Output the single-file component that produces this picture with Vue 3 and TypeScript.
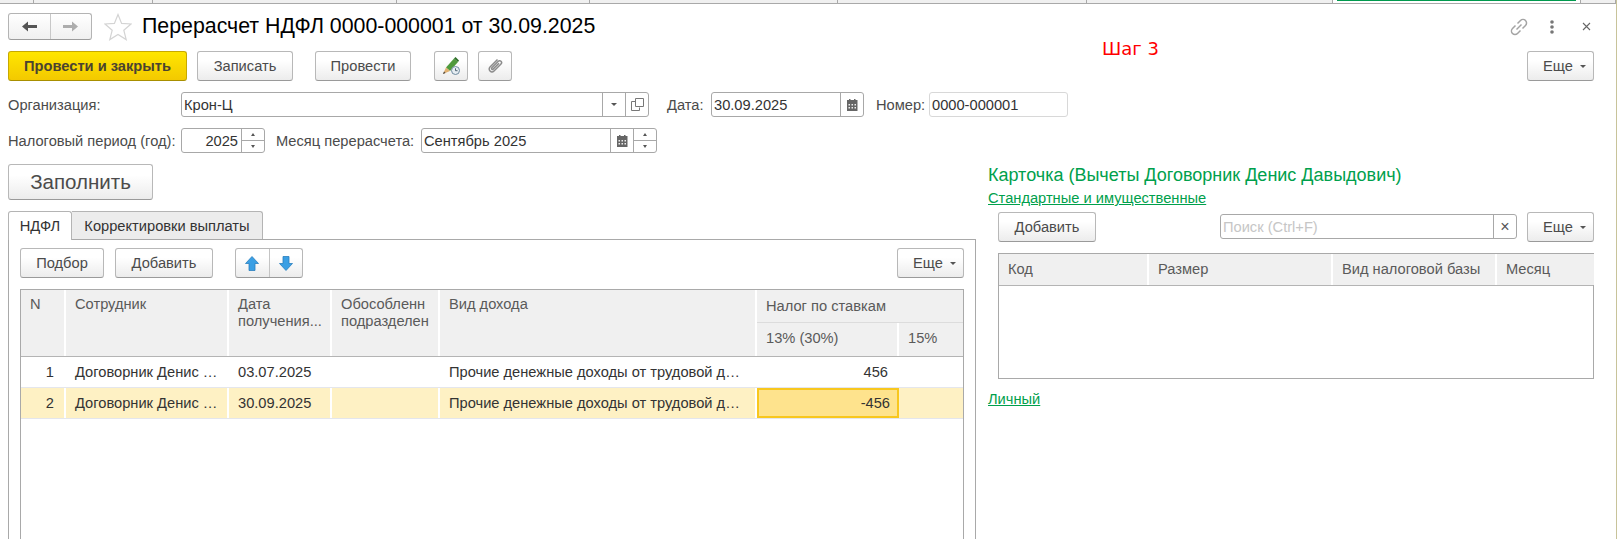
<script setup lang="ts">
const stripStops: number[] = [34, 119, 244, 193, 248, 249, 246, 248, 35]
interface Col { title: string; width: number }
const rows = [
  { n: 1, name: 'Договорник Денис …', date: '03.07.2025', kind: 'Прочие денежные доходы от трудовой д…', tax: '456', current: false },
  { n: 2, name: 'Договорник Денис …', date: '30.09.2025', kind: 'Прочие денежные доходы от трудовой д…', tax: '-456', current: true },
]
const cardCols: Col[] = [
  { title: 'Код', width: 150 },
  { title: 'Размер', width: 184 },
  { title: 'Вид налоговой базы', width: 164 },
  { title: 'Месяц', width: 97 },
]
</script>

<template>
  <div class="page">
    <div class="strip">
      <span v-for="(w, i) in stripStops" :key="i" class="strip-cell" :class="{ active: i === 7 }" :style="{ width: w + 'px' }"></span>
    </div>

    <header class="title-row">
      <div class="nav">
        <span class="nav-btn">
          <svg width="17" height="13" viewBox="0 0 17 13"><path d="M1 6.500 7 1.500V5H16V8H7v3.500z" fill="#555"/></svg>
        </span>
        <span class="nav-btn">
          <svg width="17" height="13" viewBox="0 0 17 13"><path d="M16 6.500 10 1.500V5H1V8h9v3.500z" fill="#adadad"/></svg>
        </span>
      </div>
      <svg class="star" width="28" height="28" viewBox="0 0 28 28"><path d="M14 1.500 17.600 10.400 27 11 19.800 17.200 22.200 26.600 14 21.500 5.800 26.600 8.200 17.200 1 11 10.400 10.400z" fill="#fff" stroke="#d4d4d4" stroke-width="1.200"/></svg>
      <h1 class="title">Перерасчет НДФЛ 0000-000001 от 30.09.2025</h1>
      <div class="win-icons">
        <svg width="20" height="20" viewBox="0 0 20 20" fill="none" stroke="#a4a4a4" stroke-width="1.500"><path d="M8.500 6.500 11.500 3.500a3.500 3.500 0 0 1 5 5L13.500 11.500"/><path d="M11.500 13.500 8.500 16.500a3.500 3.500 0 0 1-5-5L6.500 8.500"/><path d="M7.500 12.500 12.500 7.500"/></svg>
        <svg class="dots" width="6" height="14" viewBox="0 0 6 14" fill="#777"><circle cx="3" cy="2" r="1.800"/><circle cx="3" cy="7" r="1.800"/><circle cx="3" cy="12" r="1.800"/></svg>
        <svg class="close" width="9" height="9" viewBox="0 0 9 9" stroke="#666" stroke-width="1.100"><path d="M1 1 8 8M8 1 1 8"/></svg>
      </div>
    </header>

    <div class="toolbar">
      <button class="btn primary">Провести и закрыть</button>
      <button class="btn w-zapisat">Записать</button>
      <button class="btn w-provesti">Провести</button>
      <button class="btn icon-btn first-icon">
        <svg width="20" height="20" viewBox="0 0 20 20">
          <path d="M5 11.500 13 2.500 17 6 9 15z" fill="#4f9a3c"/>
          <path d="M13 2.500 14.500 1 18 4.500 17 6z" fill="#2f6f2a"/>
          <path d="M2 18 5 11.500 9 15z" fill="#e0b070"/>
          <path d="M2 18 3 15.500 4.500 17z" fill="#444"/>
          <circle cx="14.500" cy="14.500" r="4" fill="#e6edf2" stroke="#6f8ba0"/>
          <path d="M14.500 12.300v2.400h2" fill="none" stroke="#4d6472"/>
        </svg>
      </button>
      <button class="btn icon-btn">
        <svg width="18" height="18" viewBox="0 0 18 18" fill="none" stroke="#8c8c8c" stroke-width="1.500"><path d="M11.500 2.500 4 10a2.800 2.800 0 0 0 4 4l7-7a1.900 1.900 0 0 0-2.700-2.700L5.800 10.800a.9.900 0 0 0 1.300 1.300L13 6.200"/></svg>
      </button>
      <button class="btn more toolbar-more">Еще<i class="caret"></i></button>
    </div>

    <div class="form-row">
      <label class="lbl org-lbl">Организация:</label>
      <div class="field org">
        <span class="val">Крон-Ц</span>
        <span class="addon"><i class="caret dark"></i></span>
        <span class="addon">
          <svg width="13" height="13" viewBox="0 0 13 13" fill="none" stroke="#777"><path d="M4.500 3.500H.5v9h8v-3"/><path d="M4.500.5h8v8h-8z"/></svg>
        </span>
      </div>
      <label class="lbl date-lbl">Дата:</label>
      <div class="field date">
        <span class="val">30.09.2025</span>
        <span class="addon">
          <svg width="12" height="12" viewBox="0 0 12 12"><path d="M1 1h10.500v11H1z" fill="#666"/><path d="M3 0h1.500v2H3zM8 0h1.500v2H8z" fill="#666"/><path d="M2.500 5h1.500v1.500H2.500zM5.500 5H7v1.500H5.500zM8.500 5H10v1.500H8.500zM2.500 8h1.500v1.500H2.500zM5.500 8H7v1.500H5.500zM8.500 8H10v1.500H8.500z" fill="#eee"/></svg>
        </span>
      </div>
      <label class="lbl num-lbl">Номер:</label>
      <div class="field num"><span class="val">0000-000001</span></div>
    </div>

    <div class="form-row second">
      <label class="lbl period-lbl">Налоговый период (год):</label>
      <div class="field year">
        <span class="val right">2025</span>
        <span class="spin"><i class="up"></i><i class="down"></i></span>
      </div>
      <label class="lbl month-lbl">Месяц перерасчета:</label>
      <div class="field month">
        <span class="val">Сентябрь 2025</span>
        <span class="addon">
          <svg width="12" height="12" viewBox="0 0 12 12"><path d="M1 1h10.500v11H1z" fill="#666"/><path d="M3 0h1.500v2H3zM8 0h1.500v2H8z" fill="#666"/><path d="M2.500 5h1.500v1.500H2.500zM5.500 5H7v1.500H5.500zM8.500 5H10v1.500H8.500zM2.500 8h1.500v1.500H2.500zM5.500 8H7v1.500H5.500zM8.500 8H10v1.500H8.500z" fill="#eee"/></svg>
        </span>
        <span class="spin"><i class="up"></i><i class="down"></i></span>
      </div>
    </div>

    <div class="body">
      <section class="left">
        <button class="btn fill">Заполнить</button>
        <div class="tabs">
          <span class="tab active">НДФЛ</span>
          <span class="tab">Корректировки выплаты</span>
        </div>
        <div class="panel">
          <div class="panel-bar">
            <button class="btn w-podbor">Подбор</button>
            <button class="btn w-add">Добавить</button>
            <div class="arrows">
              <span class="arrow-btn">
                <svg width="16" height="17" viewBox="0 0 16 17"><path d="M8 1.500 14.500 8.500H11v7H5v-7H1.500z" fill="#3a9fe4" stroke="#2a7fbe" stroke-width=".8"/></svg>
              </span>
              <span class="arrow-btn">
                <svg width="16" height="17" viewBox="0 0 16 17"><path d="M8 15.500 14.500 8.500H11v-7H5v7H1.500z" fill="#3a9fe4" stroke="#2a7fbe" stroke-width=".8"/></svg>
              </span>
            </div>
            <button class="btn more panel-more">Еще<i class="caret"></i></button>
          </div>
          <div class="grid">
            <div class="grid-head">
              <div class="hc c-n">N</div>
              <div class="hc c-emp">Сотрудник</div>
              <div class="hc c-date">Дата<br>получения...</div>
              <div class="hc c-div">Обособленн<br>подразделен</div>
              <div class="hc c-kind">Вид дохода</div>
              <div class="hgroup">
                <div class="hc g-top">Налог по ставкам</div>
                <div class="g-sub">
                  <div class="hc c-13">13% (30%)</div>
                  <div class="hc c-15">15%</div>
                </div>
              </div>
            </div>
            <div v-for="r in rows" :key="r.n" class="grid-row" :class="{ current: r.current }">
              <div class="dc c-n num-cell">{{ r.n }}</div>
              <div class="dc c-emp">{{ r.name }}</div>
              <div class="dc c-date">{{ r.date }}</div>
              <div class="dc c-div"></div>
              <div class="dc c-kind">{{ r.kind }}</div>
              <div class="dc c-13 tax" :class="{ focus: r.current }">{{ r.tax }}</div>
              <div class="dc c-15"></div>
            </div>
          </div>
        </div>
      </section>

      <section class="right">
        <div class="card-title">Карточка (Вычеты Договорник Денис Давыдович)</div>
        <a class="card-link first-link">Стандартные и имущественные</a>
        <div class="card-bar">
          <button class="btn w-card-add">Добавить</button>
          <div class="field search">
            <span class="val ph">Поиск (Ctrl+F)</span>
            <span class="addon x">×</span>
          </div>
          <button class="btn more card-more">Еще<i class="caret"></i></button>
        </div>
        <div class="card-grid">
          <div class="card-head">
            <div v-for="c in cardCols" :key="c.title" class="hc" :style="{ width: c.width + 'px' }">{{ c.title }}</div>
          </div>
        </div>
        <a class="card-link second-link">Личный</a>
      </section>
    </div>

    <div class="note">Шаг 3</div>
  </div>
</template>

<style>
html, body { margin: 0; background: #fff; overflow: hidden; }
</style>

<style scoped>
.page {
  position: relative;
  width: 1617px;
  height: 539px;
  overflow: hidden;
  box-sizing: border-box;
  border-right: 1px solid #c8c39a;
  font-family: "Liberation Sans", Arial, sans-serif;
  font-size: 14.67px;
  color: #4b4b4b;
  background: #fff;
}
.strip { display: flex; height: 4px; box-sizing: border-box; border-bottom: 1px solid #a9a9a9; background: #f0f0f0; }
.strip-cell { box-sizing: border-box; border-right: 1px solid #a9a9a9; height: 3px; flex: none; }
.strip-cell.active { background: linear-gradient(#009a4e, #009a4e) no-repeat center top / calc(100% - 8px) 1px #fff; }

.title-row { display: flex; align-items: center; height: 27px; margin-top: 9px; padding-left: 8px; }
.nav { display: flex; width: 84px; height: 27px; box-sizing: border-box; border: 1px solid #b4b4b4; border-bottom-color: #9c9c9c; border-radius: 3px; background: linear-gradient(#fff, #f0f0f0); }
.nav-btn { flex: 1; display: flex; align-items: center; justify-content: center; }
.nav-btn + .nav-btn { border-left: 1px solid #c8c8c8; }
.star { margin-left: 12px; flex: none; }
.title { margin: 0 0 0 10px; font-size: 21.33px; font-weight: 400; color: #000; white-space: nowrap; }
.win-icons { margin-left: auto; display: flex; align-items: center; padding-right: 25px; }
.dots { margin-left: 20px; }
.close { margin-left: 27px; }

.btn {
  box-sizing: border-box; height: 30px; padding: 0; flex: none;
  border: 1px solid #b8b8b8; border-bottom-color: #9a9a9a; border-radius: 3px;
  background: linear-gradient(#fff 30%, #ececec);
  font: 14.67px "Liberation Sans", Arial, sans-serif; color: #4b4b4b;
  display: flex; align-items: center; justify-content: center;
}
.toolbar { display: flex; margin-top: 11px; padding-left: 8px; }
.primary { width: 179px; border-color: #c7a900; border-bottom-color: #a88f00; background: linear-gradient(#ffe600, #f3c900); font-weight: 700; color: #4a4330; }
.w-zapisat { width: 96px; margin-left: 10px; }
.w-provesti { width: 96px; margin-left: 22px; }
.icon-btn { width: 34px; margin-left: 10px; }
.first-icon { margin-left: 23px; }
.toolbar-more { margin-left: auto; margin-right: 22px; }
.more { width: 67px; padding-left: 8px; }
.caret { display: inline-block; margin-left: 7px; width: 0; height: 0; border: 3.500px solid transparent; border-top: 3.500px solid #555; border-bottom: 0; }
.caret.dark { margin: 0; }

.form-row { display: flex; align-items: center; height: 25px; margin-top: 11px; padding-left: 8px; }
.form-row.second { margin-top: 11px; }
.lbl { flex: none; white-space: nowrap; color: #4b4b4b; }
.org-lbl { width: 173px; }
.period-lbl { width: 173px; }
.date-lbl { margin-left: 18px; width: 44px; }
.num-lbl { margin-left: 12px; width: 53px; }
.month-lbl { margin-left: 11px; width: 145px; }
.field { box-sizing: border-box; display: flex; align-items: stretch; height: 25px; border: 1px solid #a8a8a8; border-radius: 3px; background: #fff; flex: none; }
.val { flex: 1; display: flex; align-items: center; padding-left: 2px; color: #333; white-space: nowrap; overflow: hidden; }
.val.right { justify-content: flex-end; padding-right: 3px; }
.addon { flex: none; width: 23px; display: flex; align-items: center; justify-content: center; border-left: 1px solid #a8a8a8; box-sizing: border-box; }
.org { width: 468px; }
.date { width: 153px; }
.num { width: 139px; border-color: #d8d8d8; }
.year { width: 84px; }
.month { width: 236px; }
.spin { flex: none; width: 23px; box-sizing: border-box; border-left: 1px solid #a8a8a8; display: flex; flex-direction: column; }
.spin i { flex: 1; display: flex; align-items: center; justify-content: center; }
.spin .up { border-bottom: 1px solid #a8a8a8; }
.spin .up::before { content: ""; border: 2.500px solid transparent; border-bottom: 3px solid #555; border-top: 0; }
.spin .down::before { content: ""; border: 2.500px solid transparent; border-top: 3px solid #555; border-bottom: 0; }

.body { display: flex; margin-top: 11px; }
.left { width: 976px; flex: none; padding-left: 8px; box-sizing: border-box; }
.fill { width: 145px; height: 36px; font-size: 20.5px; }
.tabs { display: flex; margin-top: 11px; height: 29px; position: relative; z-index: 1; }
.tab { box-sizing: border-box; display: flex; align-items: center; justify-content: center; height: 28px; width: 191px; border: 1px solid #b4b4b4; border-bottom: 0; border-left: 0; border-radius: 0 3px 0 0; background: #ececec; color: #333; }
.tab.active { width: 64px; height: 29px; border-left: 1px solid #b4b4b4; background: #fff; border-radius: 3px 3px 0 0; }
.panel { box-sizing: border-box; margin-top: -1px; height: 320px; border: 1px solid #a9a9a9; border-bottom: 0; padding: 8px 11px 0; }
.panel-bar { display: flex; }
.w-podbor { width: 84px; }
.w-add { width: 98px; margin-left: 11px; }
.arrows { display: flex; width: 68px; height: 30px; margin-left: 22px; box-sizing: border-box; border: 1px solid #b8b8b8; border-bottom-color: #9a9a9a; border-radius: 3px; background: linear-gradient(#fff 30%, #ececec); }
.arrow-btn { flex: 1; display: flex; align-items: center; justify-content: center; }
.arrow-btn + .arrow-btn { border-left: 1px solid #c4c4c4; }
.panel-more { margin-left: auto; margin-right: 0; }

.grid { box-sizing: border-box; margin-top: 11px; height: 260px; border: 1px solid #a9a9a9; border-bottom: 0; color: #333; }
.grid-head { display: flex; height: 66px; border-bottom: 1px solid #b4b4b4; background: #f0f0f0; box-sizing: content-box; }
.hc { box-sizing: border-box; padding: 6px 0 0 9px; color: #5a5a5a; line-height: 17px; border-right: 2px solid #fff; white-space: nowrap; overflow: hidden; flex: none; background: #f0f0f0; }
.c-n { width: 45px; }
.c-emp { width: 163px; }
.c-date { width: 103px; }
.c-div { width: 108px; }
.c-kind { width: 317px; }
.c-13 { width: 142px; }
.c-15 { width: 64px; }
.hgroup { flex: 1; display: flex; flex-direction: column; }
.g-top { height: 32px; padding-top: 8px; border-right: 0; }
.g-sub { display: flex; height: 34px; border-top: 1px solid #dcdcdc; }
.g-sub .hc { padding-top: 7px; }
.g-sub .c-15 { border-right: 0; flex: 1; }
.grid-row { display: flex; height: 31px; box-sizing: border-box; border-bottom: 1px solid #e4e6ec; }
.grid-row.current { background: #fef1c4; }
.dc { box-sizing: border-box; flex: none; display: flex; align-items: center; padding-left: 9px; border-right: 2px solid #fff; white-space: nowrap; overflow: hidden; }
.current .dc { border-right-color: #fff; }
.grid-row .c-15 { flex: 1; border-right: 0; }
.num-cell { justify-content: flex-end; padding-right: 10px; }
.tax { justify-content: flex-end; padding-right: 9px; }
.tax.focus { background: #fee38d; border: 2px solid #f8c71e; padding-right: 7px; }

.right { flex: 1; padding-left: 12px; box-sizing: border-box; }
.card-title { margin-top: 1px; font-size: 18px; line-height: 20px; color: #00a04c; white-space: nowrap; }
.card-link { display: block; width: max-content; font-size: 14.67px; line-height: 17px; color: #00a04c; text-decoration: underline; }
.first-link { margin-top: 5px; }
.card-bar { display: flex; margin-top: 5px; margin-left: 10px; width: 596px; }
.w-card-add { width: 98px; }
.search { width: 297px; margin: 2px 0 0 124px; }
.ph { color: #c6c6c6; }
.x { color: #555; font-size: 16px; }
.card-more { margin-left: auto; }
.card-grid { box-sizing: border-box; margin: 11px 0 0 10px; width: 596px; height: 126px; border: 1px solid #a9a9a9; }
.card-head { display: flex; height: 31px; background: #f0f0f0; border-bottom: 1px solid #b4b4b4; box-sizing: content-box; }
.card-head .hc { padding-top: 7px; }
.card-head .hc:last-child { border-right: 0; }
.second-link { margin-top: 12px; }

.note { position: absolute; left: 1102px; top: 38px; font: 18px "DejaVu Sans", sans-serif; color: #f00; white-space: nowrap; }
</style>
